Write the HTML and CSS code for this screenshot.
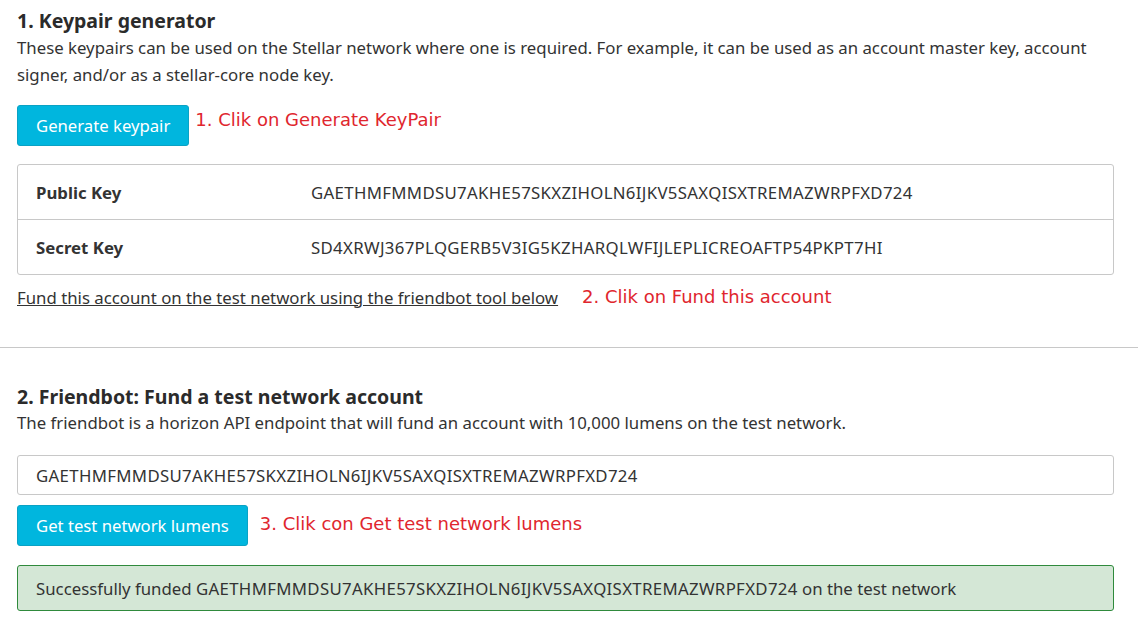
FILE: index.html
```html
<!DOCTYPE html>
<html>
<head>
<meta charset="utf-8">
<link rel="stylesheet" href="styles.css">
</head>
<body>
<section class="section first">
  <h2 class="title">1. Keypair generator</h2>
  <p class="desc">These keypairs can be used on the Stellar network where one is required. For example, it can be used as an account master key, account signer, and/or as a stellar-core node key.</p>
  <div class="action-row">
    <button class="btn">Generate keypair</button>
    <span class="note">1. Clik on Generate KeyPair</span>
  </div>
  <div class="keytable">
    <div class="keyrow">
      <span class="keylabel">Public Key</span>
      <span class="keyvalue">GAETHMFMMDSU7AKHE57SKXZIHOLN6IJKV5SAXQISXTREMAZWRPFXD724</span>
    </div>
    <div class="keyrow">
      <span class="keylabel">Secret Key</span>
      <span class="keyvalue">SD4XRWJ367PLQGERB5V3IG5KZHARQLWFIJLEPLICREOAFTP54PKPT7HI</span>
    </div>
  </div>
  <div class="link-row">
    <a class="fund-link" href="#">Fund this account on the test network using the friendbot tool below</a>
    <span class="note">2. Clik on Fund this account</span>
  </div>
</section>
<hr class="divider">
<section class="section second">
  <h2 class="title">2. Friendbot: Fund a test network account</h2>
  <p class="desc">The friendbot is a horizon API endpoint that will fund an account with 10,000 lumens on the test network.</p>
  <div class="input"><span class="keyvalue">GAETHMFMMDSU7AKHE57SKXZIHOLN6IJKV5SAXQISXTREMAZWRPFXD724</span></div>
  <div class="action-row second-row">
    <button class="btn">Get test network lumens</button>
    <span class="note">3. Clik con Get test network lumens</span>
  </div>
  <div class="success"><span>Successfully funded <span class="keyvalue">GAETHMFMMDSU7AKHE57SKXZIHOLN6IJKV5SAXQISXTREMAZWRPFXD724</span> on the test network</span></div>
</section>
</body>
</html>
```
FILE: styles.css
```css
html, body {
  margin: 0;
  padding: 0;
  background: #fff;
}
body {
  font-family: "Noto Sans", "Open Sans", sans-serif;
  color: #333;
  font-size: 16.8px;
}
.section {
  padding: 0 24px 0 17px;
}
.first {
  padding-top: 8px;
}
.title {
  margin: 0;
  font-size: 19.5px;
  font-weight: 700;
  line-height: 26px;
  color: #2b2b2b;
}
.desc {
  margin: 0;
  line-height: 27px;
}
.action-row {
  display: flex;
  align-items: flex-start;
  margin-top: 17px;
}
.btn {
  font-family: inherit;
  font-size: 16.7px;
  color: #fff;
  background: #00b6de;
  border: 1px solid #0aa2c4;
  border-radius: 3px;
  height: 41px;
  padding: 0 18px;
}
.note {
  font-family: "DejaVu Sans", sans-serif;
  font-size: 18px;
  color: #e0262e;
  margin-left: 6px;
  line-height: 30px;
}
.keytable {
  margin-top: 18px;
  border: 1px solid #c8c8c8;
  border-radius: 3px;
}
.keyrow {
  display: flex;
  align-items: center;
  height: 54px;
  padding-left: 18px;
}
.keyrow + .keyrow {
  border-top: 1px solid #c8c8c8;
}
.keylabel {
  width: 275px;
  font-weight: 700;
}
.keyvalue {
  letter-spacing: 0.33px;
}
.link-row {
  display: flex;
  align-items: center;
  margin-top: 7px;
}
.fund-link {
  color: #333;
  text-decoration: underline;
}
.link-row .note {
  margin-left: 24px;
}
.divider {
  margin: 35px 0 0;
  border: 0;
  border-top: 1px solid #c8c8c8;
}
.second {
  padding-top: 37px;
}
.second .title {
  line-height: 24px;
}
.input {
  margin-top: 19px;
  height: 38px;
  border: 1px solid #c8c8c8;
  border-radius: 3px;
  display: flex;
  align-items: center;
  padding-left: 18px;
}
.second-row {
  margin-top: 10px;
  align-items: center;
}
.second-row .note {
  margin-left: 12px;
  margin-bottom: 3px;
}
.success {
  margin-top: 19px;
  height: 44px;
  background: #d4e7d6;
  border: 1px solid #2f8a3c;
  border-radius: 3px;
  display: flex;
  align-items: center;
  padding-left: 18px;
  white-space: nowrap;
}
```
